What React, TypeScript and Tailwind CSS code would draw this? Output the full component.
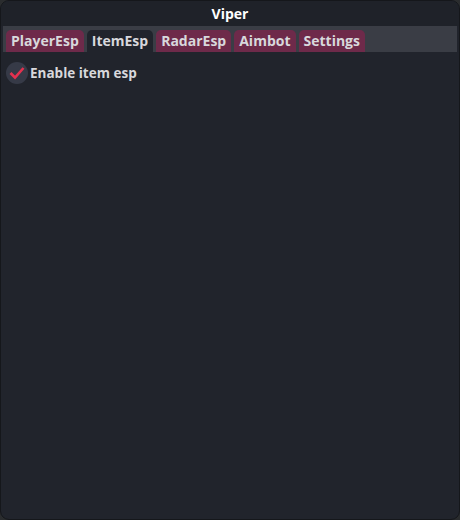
import { useState } from "react";

const tabs = ["PlayerEsp", "ItemEsp", "RadarEsp", "Aimbot", "Settings"];

export default function App() {
    const [active, setActive] = useState("ItemEsp");
    const [enabled, setEnabled] = useState(true);

    return (
        <div className="h-[520px] w-[460px] bg-[#2a2c2e]" style={{ fontFamily: '"Open Sans", "Noto Sans", sans-serif' }}>
            <div className="flex h-full flex-col overflow-hidden rounded-[9px] border border-[#15171b] bg-[#21242c]">
                {/* Title */}
                <div className="flex h-[25px] items-center justify-center bg-[#1f2229] pb-[1px] text-[14px] font-bold text-white">
                    Viper
                </div>

                {/* Tabs */}
                <div className="mx-[2px] flex h-[26px] items-end gap-[3px] bg-[#3a3d45] px-[3px]">
                    {tabs.map((t) => (
                        <button
                            key={t}
                            onClick={() => setActive(t)}
                            className={
                                "h-[22px] rounded-t-[5px] px-[5px] text-[14px] font-bold leading-[22px] text-[#d8d8dc] " +
                                (active === t ? "bg-[#21242c]" : "bg-[#6e2a4a]")
                            }
                        >
                            {t}
                        </button>
                    ))}
                </div>

                {/* Content */}
                <div className="px-[5px] pt-[10px]">
                    <label className="flex cursor-pointer items-center gap-[2px]" onClick={() => setEnabled(!enabled)}>
                        <span className="flex h-[22px] w-[22px] items-center justify-center rounded-full bg-[#363a47]">
                            {enabled && (
                                <svg width="16" height="14" viewBox="0 0 16 14">
                                    <path d="M1.5 7 L6 11.5 L14.5 2" fill="none" stroke="#e4314f" strokeWidth="2.6" />
                                </svg>
                            )}
                        </span>
                        <span className="text-[13.5px] font-bold text-[#d8d8dc]">Enable item esp</span>
                    </label>
                </div>
            </div>
        </div>
    );
}
